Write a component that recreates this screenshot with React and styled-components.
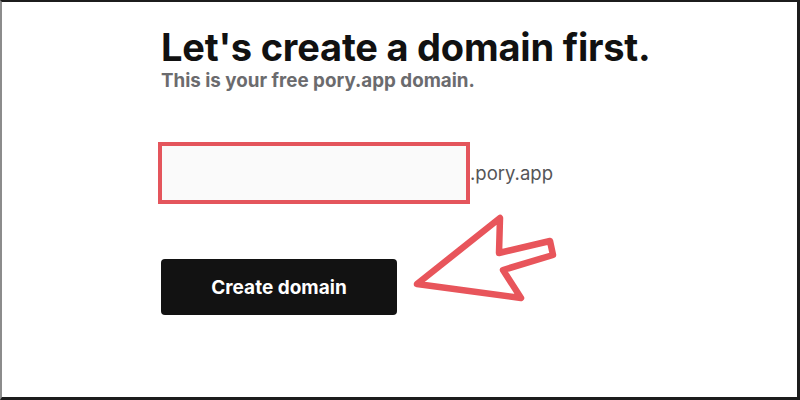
import React from 'react';
import styled, { createGlobalStyle } from 'styled-components';

const GlobalStyle = createGlobalStyle`
  html, body {
    margin: 0;
    padding: 0;
    background: #ffffff;
  }
  * { box-sizing: border-box; }
`;

const Frame = styled.div`
  position: relative;
  width: 800px;
  height: 400px;
  background: #ffffff;
  border-top: 2px solid #1c1c1c;
  border-left: 2px solid #8c8c8c;
  border-right: 3px solid #1c1c1c;
  border-bottom: 3px solid #1c1c1c;
  font-family: Inter, 'Noto Sans', sans-serif;
  overflow: hidden;
`;

const Content = styled.div`
  display: flex;
  flex-direction: column;
  align-items: flex-start;
  padding: 22px 0 0 159px;
`;

const Title = styled.h1`
  margin: 0;
  font-size: 38px;
  line-height: 46px;
  font-weight: 700;
  letter-spacing: -0.2px;
  color: #111111;
`;

const Subtitle = styled.p`
  margin: 0;
  font-size: 18.8px;
  line-height: 22px;
  font-weight: 700;
  color: #6b6b6e;
`;

const DomainRow = styled.div`
  display: flex;
  align-items: center;
  margin: 50px 0 0 -3px;
`;

const DomainInput = styled.input`
  width: 312px;
  height: 62px;
  border: 4px solid #e4555c;
  background: #fafafa;
  outline: none;
  padding: 0 14px;
  font-family: inherit;
  font-size: 18px;
`;

const Suffix = styled.span`
  font-size: 18.5px;
  color: #555558;
`;

const PrimaryButton = styled.button`
  margin-top: 55px;
  width: 236px;
  height: 56px;
  border: none;
  border-radius: 4px;
  background: #121212;
  color: #ffffff;
  font-family: inherit;
  font-size: 19px;
  font-weight: 700;
  cursor: pointer;
`;

const Pointer = styled.svg`
  position: absolute;
  left: 0;
  top: 0;
  pointer-events: none;
`;

const App = () => (
  <>
    <GlobalStyle />
    <Frame>
      <Content>
        <Title>Let's create a domain first.</Title>
        <Subtitle>This is your free pory.app domain.</Subtitle>
        <DomainRow>
          <DomainInput type="text" />
          <Suffix>.pory.app</Suffix>
        </DomainRow>
        <PrimaryButton>Create domain</PrimaryButton>
      </Content>
      <Pointer width="800" height="400" viewBox="0 0 800 400">
        <polygon
          points="415,282 498,216 497,251 548,239 551,253 501,268 519,296"
          fill="none"
          stroke="#e8555b"
          strokeWidth="6.5"
          strokeLinejoin="round"
        />
      </Pointer>
    </Frame>
  </>
);

export default App;
